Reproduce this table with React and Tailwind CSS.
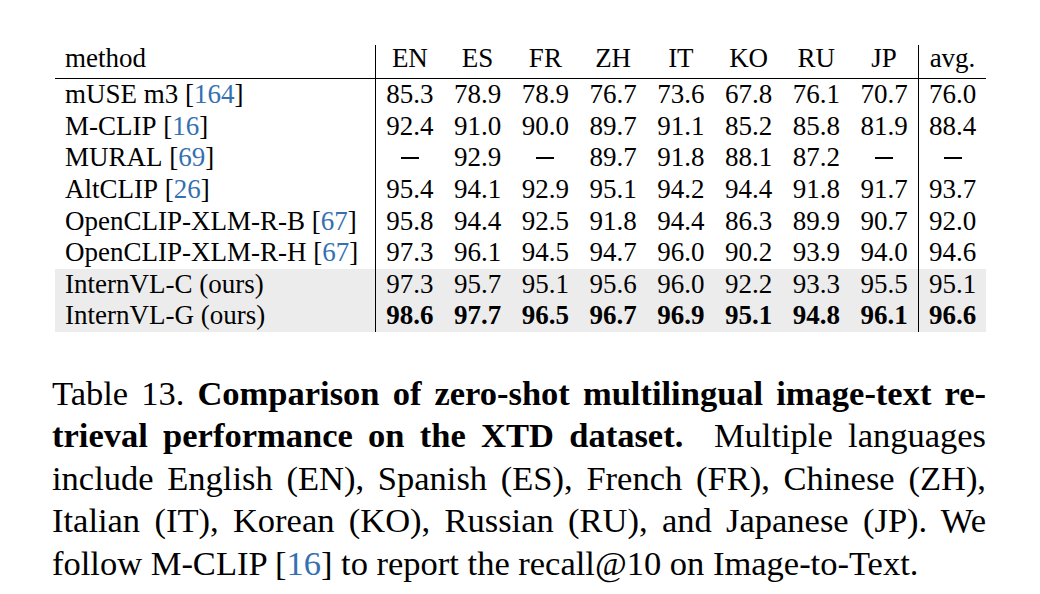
const cols = ['EN', 'ES', 'FR', 'ZH', 'IT', 'KO', 'RU', 'JP'];

const rows = [
  { name: 'mUSE m3', cite: '164', vals: ['85.3', '78.9', '78.9', '76.7', '73.6', '67.8', '76.1', '70.7'], avg: '76.0' },
  { name: 'M-CLIP', cite: '16', vals: ['92.4', '91.0', '90.0', '89.7', '91.1', '85.2', '85.8', '81.9'], avg: '88.4' },
  { name: 'MURAL', cite: '69', vals: ['–', '92.9', '–', '89.7', '91.8', '88.1', '87.2', '–'], avg: '–' },
  { name: 'AltCLIP', cite: '26', vals: ['95.4', '94.1', '92.9', '95.1', '94.2', '94.4', '91.8', '91.7'], avg: '93.7' },
  { name: 'OpenCLIP-XLM-R-B', cite: '67', vals: ['95.8', '94.4', '92.5', '91.8', '94.4', '86.3', '89.9', '90.7'], avg: '92.0' },
  { name: 'OpenCLIP-XLM-R-H', cite: '67', vals: ['97.3', '96.1', '94.5', '94.7', '96.0', '90.2', '93.9', '94.0'], avg: '94.6' },
  { name: 'InternVL-C (ours)', vals: ['97.3', '95.7', '95.1', '95.6', '96.0', '92.2', '93.3', '95.5'], avg: '95.1', shade: true },
  { name: 'InternVL-G (ours)', vals: ['98.6', '97.7', '96.5', '96.7', '96.9', '95.1', '94.8', '96.1'], avg: '96.6', shade: true, bold: true },
];

const Cite = ({ n }) => (
  <span>
    [<span className="text-[#3570b0]">{n}</span>]
  </span>
);

// en-dash rule used for missing values
const Dash = () => <span className="inline-block w-[18px] h-[1.5px] bg-black align-middle" />;

const Cell = ({ v, bold }) => (
  <div className={`flex items-center justify-center ${bold ? 'font-bold' : ''}`}>
    {v === '–' ? <Dash /> : v}
  </div>
);

const Row = ({ row }) => (
  <div
    className={`grid grid-cols-[321px_repeat(8,67.75px)_68px] h-[31.6px] leading-none ${
      row.shade ? 'bg-[#ececec]' : ''
    }`}
  >
    <div className="flex items-center pl-[10px] border-r border-black">
      {row.name}
      {row.cite && (
        <>
          &nbsp;<Cite n={row.cite} />
        </>
      )}
    </div>
    {row.vals.map((v, i) => (
      <Cell key={i} v={v} bold={row.bold} />
    ))}
    <div className="flex items-center justify-center border-l border-black">
      {row.avg === '–' ? <Dash /> : <span className={row.bold ? 'font-bold' : ''}>{row.avg}</span>}
    </div>
  </div>
);

export default function App() {
  return (
    <div className="w-[1040px] h-[594px] bg-white text-black font-['Liberation_Serif','Times_New_Roman',serif] overflow-hidden">
      <div className="pt-[45px] pl-[55px]">
        <div className="w-[931px] text-[27px]">
          <div className="grid grid-cols-[321px_repeat(8,67.75px)_68px] h-[34px] leading-none border-b-[1.5px] border-black">
            <div className="flex items-end pb-[8px] pl-[10px] border-r border-black">method</div>
            {cols.map((c) => (
              <div key={c} className="flex items-end justify-center pb-[8px]">
                {c}
              </div>
            ))}
            <div className="flex items-end justify-center pb-[8px] border-l border-black">avg.</div>
          </div>
          {rows.map((r) => (
            <Row key={r.name} row={r} />
          ))}
        </div>
      </div>

      <div className="mt-[40px] ml-[52px] w-[934px] text-[34.5px] leading-[42.5px]">
        <div className="text-justify [text-align-last:justify]">
          Table 13. <span className="font-bold">Comparison of zero-shot multilingual image-text re-</span>
        </div>
        <div className="text-justify [text-align-last:justify]">
          <span className="font-bold">trieval performance on the XTD dataset.</span>&nbsp; Multiple languages
        </div>
        <div className="text-justify [text-align-last:justify]">
          include English (EN), Spanish (ES), French (FR), Chinese (ZH),
        </div>
        <div className="text-justify [text-align-last:justify]">
          Italian (IT), Korean (KO), Russian (RU), and Japanese (JP). We
        </div>
        <div>
          follow M-CLIP [<span className="text-[#3570b0]">16</span>] to report the recall@10 on Image-to-Text.
        </div>
      </div>
    </div>
  );
}
